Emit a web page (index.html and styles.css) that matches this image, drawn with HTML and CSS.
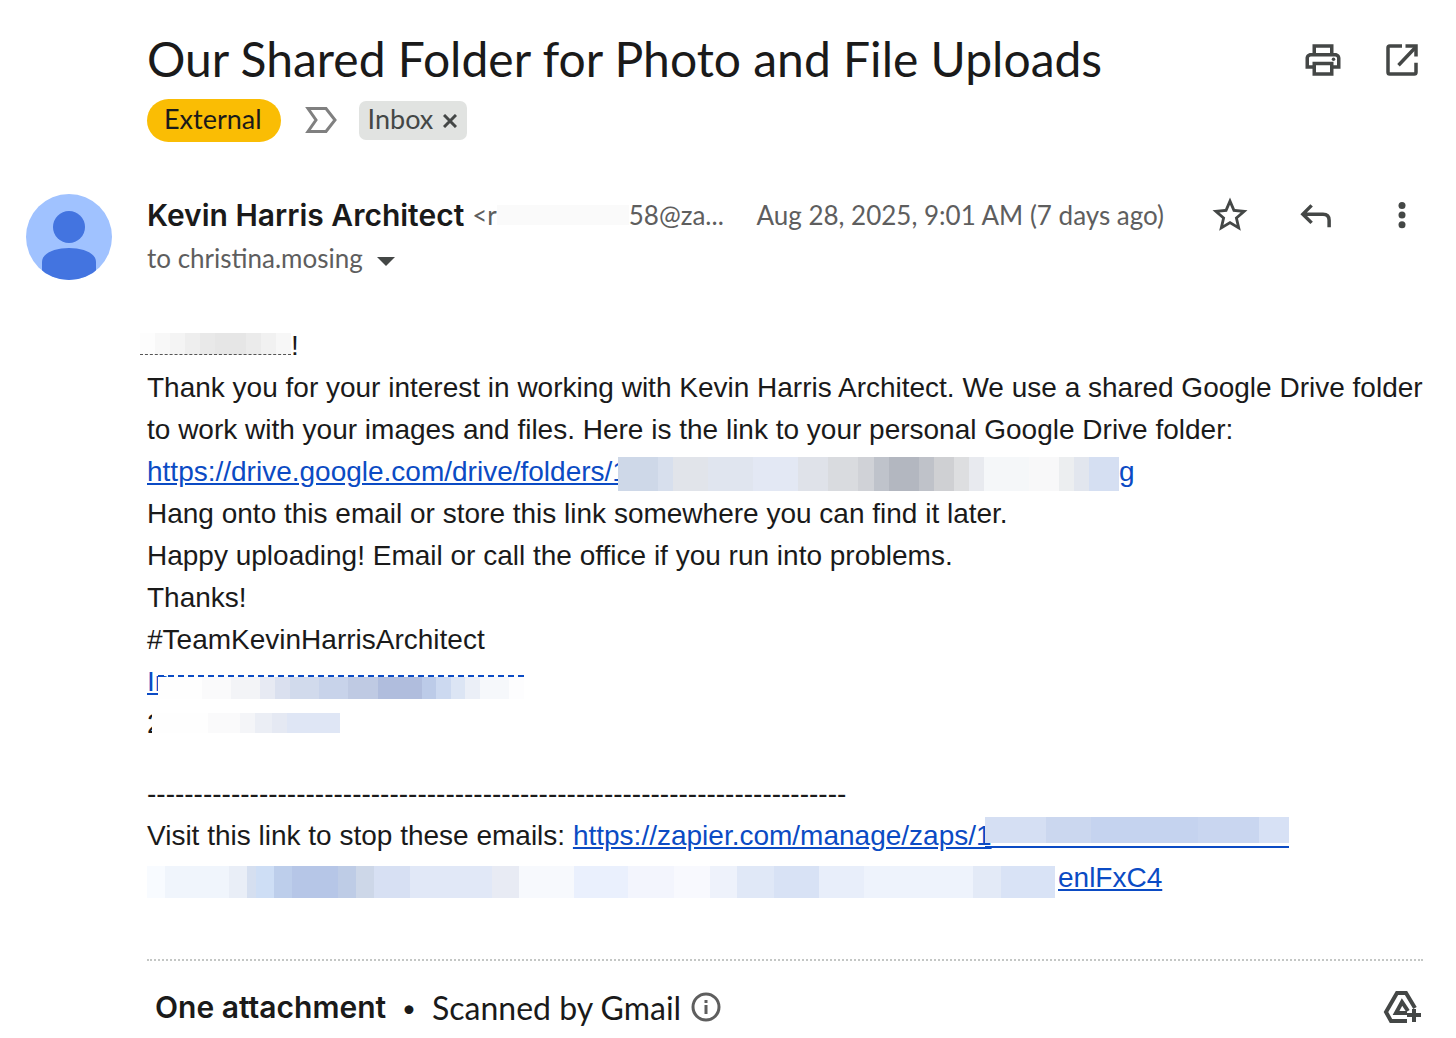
FILE: index.html
```html
<!DOCTYPE html>
<html lang="en">
<head>
    <meta charset="utf-8">
    <title>Our Shared Folder for Photo and File Uploads</title>
    <link rel="stylesheet" href="styles.css">
</head>
<body>
    <main class="mail">
        <header class="subject">
            <div class="subject-text">
                <h1>Our Shared Folder for Photo and File Uploads</h1>
                <div class="labels">
                    <span class="external">External</span>
                    <svg class="marker" viewBox="0 0 32 28"><path d="M3 2.500H21L30 14L21 25.500H3L11 14Z"/></svg>
                    <span class="inbox">Inbox
                        <button class="remove" aria-label="Remove label Inbox"><svg viewBox="0 0 14 14"><path d="M1 1L13 13M13 1L1 13"/></svg></button>
                    </span>
                </div>
            </div>
            <div class="actions">
                <button class="icon" aria-label="Print all"><svg viewBox="0 0 24 24"><path d="M19 8h-1V3H6v5H5c-1.660 0-3 1.340-3 3v6h4v4h12v-4h4v-6c0-1.660-1.340-3-3-3zM8 5h8v3H8V5zm8 14H8v-4h8v4zm2-4v-2H6v2H4v-4c0-.55.45-1 1-1h14c.55 0 1 .45 1 1v4h-2z"/><circle cx="18" cy="11.500" r="1"/></svg></button>
                <button class="icon" aria-label="In new window"><svg viewBox="0 0 24 24"><path d="M12 4H5Q4 4 4 5V19Q4 20 5 20H19Q20 20 20 19V13.500M10 15L19.500 5" class="line"/><path d="M14 3H21V10H19V5H14Z"/></svg></button>
            </div>
        </header>

        <section class="sender">
            <svg class="avatar" viewBox="0 0 86 86">
                <clipPath id="round"><circle cx="43" cy="43" r="43"/></clipPath>
                <g clip-path="url(#round)">
                    <rect width="86" height="86" fill="#a0c2ff"/>
                    <circle cx="43" cy="33" r="16" fill="#4374e0"/>
                    <path d="M16 86V68C16 59 29 54 43 54S70 59 70 68V86Z" fill="#4374e0"/>
                </g>
            </svg>
            <div class="sender-text">
                <div class="from">
                    <strong>Kevin Harris Architect</strong>
                    <span class="address">&lt;r<i class="redact redact-address"></i>58@za...</span>
                </div>
                <div class="to">to christina.mosing <button class="details" aria-label="Show details"></button></div>
            </div>
            <time datetime="2025-08-28T09:01">Aug 28, 2025, 9:01 AM (7 days ago)</time>
            <div class="actions">
                <button class="icon" aria-label="Star"><svg viewBox="0 0 24 24"><path d="M22 9.240l-7.190-.62L12 2 9.190 8.630 2 9.240l5.460 4.730L5.820 21 12 17.270 18.180 21l-1.630-7.030L22 9.240zM12 15.400l-3.760 2.270 1-4.280-3.320-2.880 4.380-.38L12 6.100l1.710 4.040 4.380.38-3.320 2.880 1 4.280L12 15.400z"/></svg></button>
                <button class="icon" aria-label="Reply"><svg viewBox="0 0 24 24"><path class="line" d="M9.500 6.500L4.500 11.500L9.500 16.500M4.500 11.500H16Q19.500 11.500 19.500 15V19"/></svg></button>
                <button class="icon" aria-label="More"><svg viewBox="0 0 24 24"><circle cx="12" cy="6.500" r="2"/><circle cx="12" cy="12" r="2"/><circle cx="12" cy="17.500" r="2"/></svg></button>
            </div>
        </section>

        <article class="message">
            <p><i class="redact redact-name"></i>!</p>
            <p>Thank you for your interest in working with Kevin Harris Architect. We use a shared Google Drive folder to work with your images and files. Here is the link to your personal Google Drive folder:</p>
            <p><a href="#">https://drive.google.com/drive/folders/1<i class="redact redact-folder"></i>g</a></p>
            <p>Hang onto this email or store this link somewhere you can find it later.</p>
            <p>Happy uploading! Email or call the office if you run into problems.</p>
            <p>Thanks!</p>
            <p>#TeamKevinHarrisArchitect</p>
            <p><a href="#">In<i class="redact redact-email"></i></a></p>
            <p>2<i class="redact redact-phone"></i></p>
            <p class="footer">---------------------------------------------------------------------------</p>
            <p>Visit this link to stop these emails: <a href="#">https://zapier.com/manage/zaps/1<i class="redact redact-zap"></i><br><i class="redact redact-stop"></i>enlFxC4</a></p>
        </article>

        <footer class="attachments">
            <h2>One attachment</h2>
            <span class="dot">•</span>
            <span class="scanned">Scanned by Gmail</span>
            <svg class="info" viewBox="0 0 30 30"><circle cx="15" cy="15" r="13"/><path d="M15 13V22M15 8V11"/></svg>
            <button class="icon drive" aria-label="Add all to Drive"><svg viewBox="0 0 42 42"><path d="M26 35H10L5 26L16 7H25L34 22M26 27H15L21 16L27 25"/><path d="M33 23V36M26 29H40"/></svg></button>
        </footer>
    </main>
</body>
</html>
```
FILE: styles.css
```css
body {
    margin: 0;
    background: #fff;
    color: #1a1a1a;
    font-family: "Google Sans", Lato, sans-serif;
}
h1, h2, p {
    margin: 0;
    font-weight: normal;
}
button {
    padding: 0;
    border: none;
    background: none;
    cursor: pointer;
}
svg {
    display: block;
}
.mail {
    padding: 29px 33px 0 147px;
}
.subject {
    display: flex;
    justify-content: space-between;
    align-items: flex-start;
}
h1 {
    font-size: 48px;
    line-height: 60px;
}
.labels {
    display: flex;
    align-items: center;
    margin-top: 9px;
    height: 44px;
    font-size: 27px;
}
.external {
    padding: 0 19px 3px 17px;
    border-radius: 22px;
    background: #fabd04;
    line-height: 40px;
}
.marker {
    width: 32px;
    height: 28px;
    margin: 0 22px 0 24px;
    fill: none;
    stroke: #808080;
    stroke-width: 3;
}
.inbox {
    display: flex;
    align-items: center;
    gap: 10px;
    padding: 0 10px 3px 9px;
    border-radius: 7px;
    background: #e1e3e1;
    color: #444746;
    line-height: 36px;
}
.remove {
    padding-top: 4px;
}
.remove svg {
    width: 14px;
    height: 14px;
    stroke: #444746;
    stroke-width: 3;
}
.actions {
    display: flex;
    gap: 44px;
}
.subject .actions {
    gap: 37px;
    padding-top: 10px;
}
.icon svg {
    width: 42px;
    height: 42px;
    fill: #444746;
}
.icon .line {
    fill: none;
    stroke: #444746;
    stroke-width: 2;
}
.sender {
    display: flex;
    align-items: flex-start;
    margin: 52px 0 0 -121px;
    color: #5e5e5e;
    font-size: 26px;
}
.avatar {
    width: 86px;
    height: 86px;
    margin-right: 35px;
}
.sender-text {
    flex: 1;
    line-height: 43px;
}
.from {
    display: flex;
    gap: 8px;
    height: 43px;
    white-space: nowrap;
}
strong {
    color: #1a1a1a;
    font-family: "Google Sans", Inter, sans-serif;
    font-size: 30px;
    font-weight: 600;
}
.details {
    margin-left: 8px;
    border: 9px solid transparent;
    border-top-color: #444746;
    border-bottom: none;
    vertical-align: middle;
}
time {
    margin-right: 45px;
    line-height: 43px;
}
.message {
    padding: 45px 0 60px;
    border-bottom: 2px dotted #c4c7c5;
    font-family: "Liberation Sans", Arial, sans-serif;
    font-size: 28px;
    line-height: 42px;
}
.message p {
    min-height: 42px;
}
a {
    color: #0b4bc4;
}
.footer {
    margin-top: 28px;
}
.redact {
    display: inline-block;
    vertical-align: top;
}
.redact-address {
    width: 132px;
    height: 20px;
    margin-top: 11px;
    background: #fafafa;
}
.redact-name {
    width: 151px;
    height: 21px;
    margin: 8px 0 0 -7px;
    border-bottom: 1px dashed #555;
    background: linear-gradient(90deg, #fdfdfd 10%, #f8f8f8 10% 20%, #f4f4f4 20% 30%, #eee 30% 40%, #e9e9e9 40% 50%, #e6e6e6 50% 70%, #ebebeb 70% 80%, #f1f1f1 80% 90%, #f7f7f7 90%);
}
.redact-folder {
    width: 501px;
    height: 34px;
    margin: 6px 0 0 -10px;
    background: linear-gradient(90deg, #ced8e8 8%, #d7dfed 8% 11%, #e1e4ea 11% 18%, #e0e5ef 18% 27%, #e3e8f4 27% 36%, #dfe2e9 36% 42%, #d9dbdf 42% 48%, #d0d2d7 48% 51%, #bfc3cb 51% 54%, #b3b7c0 54% 60%, #bfc2c9 60% 63%, #cfd0d3 63% 67%, #dddee0 67% 70%, #e8eaef 70% 73%, #f5f7f9 73% 82%, #f8f8f9 82% 88%, #eceef0 88% 91%, #e2e6ee 91% 94%, #d5dff2 94%);
}
.redact-email {
    width: 366px;
    height: 22px;
    margin: 14px 0 0 -12px;
    border-top: 2px dashed #0b4bc4;
    background: linear-gradient(90deg, #fefefe 12%, #fafafb 12% 20%, #f3f4f7 20% 28%, #e7eaf3 28% 32%, #dae0ef 32% 36%, #d1daec 36% 44%, #c8d3ea 44% 52%, #bfcae3 52% 60%, #b0bddd 60% 72%, #bccbe8 72% 76%, #ccd9f0 76% 80%, #dce5f4 80% 84%, #ebeff7 84% 88%, #f6f8fb 88% 96%, #fdfdfe 96%) padding-box;
}
.redact-phone {
    width: 188px;
    height: 20px;
    margin: 10px 0 0 -11px;
    background: linear-gradient(90deg, #fefefe 30%, #fafafb 30% 47%, #f4f5f8 47% 55%, #ebeef5 55% 64%, #e5e9f3 64% 72%, #dfe6f5 72%);
}
.redact-zap {
    width: 304px;
    height: 26px;
    margin: 2px 0 0 -7px;
    padding-bottom: 3px;
    border-bottom: 2px solid #0b4bc4;
    background: linear-gradient(90deg, #d5dff3 20%, #cbd7ef 20% 35%, #c5d3ef 35% 70%, #c9d6f0 70% 90%, #d7e1f5 90%) content-box;
}
.redact-stop {
    width: 908px;
    height: 32px;
    margin: 9px 3px 0 0;
    background: linear-gradient(90deg, #f8fbff 2%, #f0f5fc 2% 9%, #e9eef7 9% 11%, #d5dff0 11% 12%, #cedef5 12% 14%, #bdceeb 14% 16%, #b6c6e7 16% 21%, #becce6 21% 23%, #cdd7e8 23% 25%, #d7e0f3 25% 29%, #e1e8f7 29% 38%, #e8ebf4 38% 41%, #f7f9fd 41% 47%, #eaf0fd 47% 53%, #f3f5fd 53% 58%, #f8f9fe 58% 62%, #eef2fb 62% 65%, #e0e8f7 65% 69%, #d8e2f5 69% 74%, #e8eefa 74% 79%, #eef3fc 79% 91%, #e3eaf7 91% 94%, #d9e3f6 94%);
}
.attachments {
    display: flex;
    align-items: center;
    height: 92px;
    padding-left: 8px;
    font-size: 32px;
}
h2 {
    font-family: "Google Sans", Inter, sans-serif;
    font-size: 30px;
    font-weight: 600;
}
.dot {
    margin: 0 16px;
    font-size: 24px;
}
.info {
    width: 30px;
    height: 30px;
    margin-left: 10px;
    fill: none;
    stroke: #5e5e5e;
    stroke-width: 3;
}
.drive {
    margin-left: auto;
}
.drive svg {
    fill: none;
    stroke: #444746;
    stroke-width: 4;
}
```
